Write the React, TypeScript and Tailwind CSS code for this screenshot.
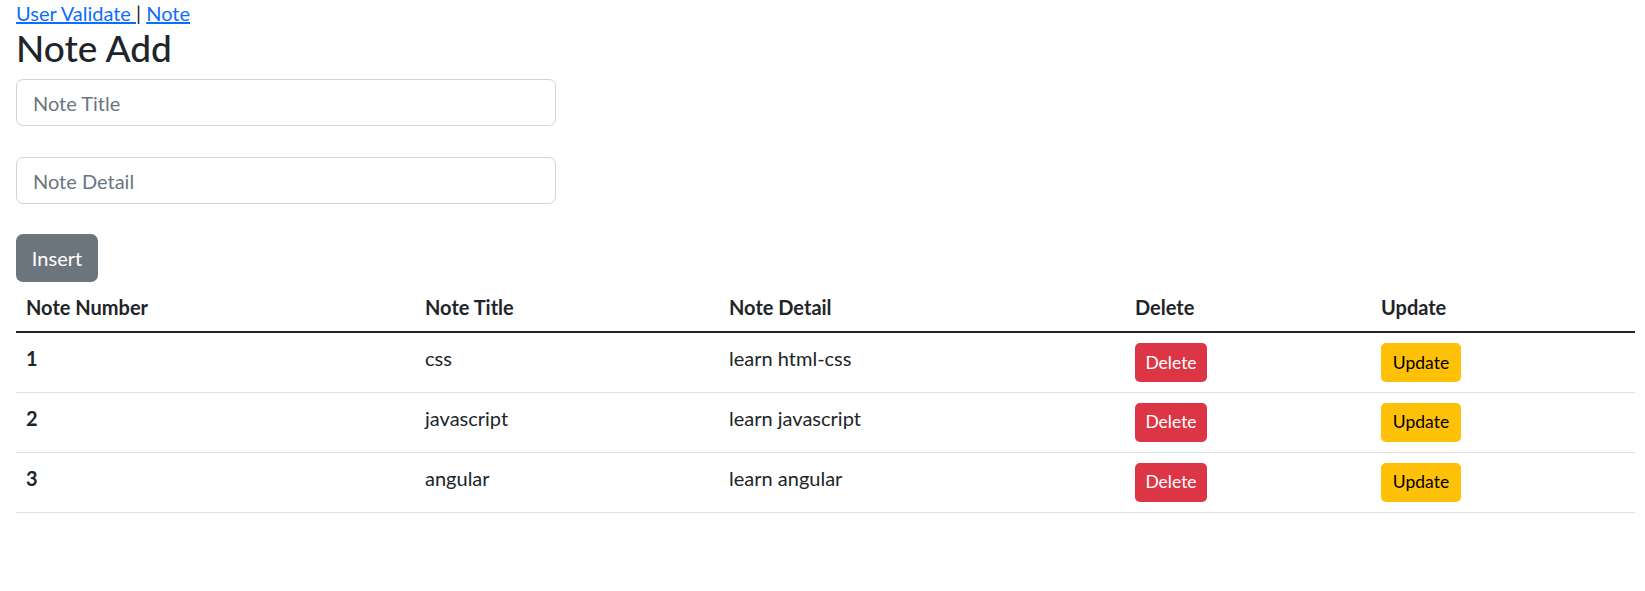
import { useState } from 'react'

type Note = { id: number; title: string; detail: string }

const initialNotes: Note[] = [
    { id: 1, title: 'css', detail: 'learn html-css' },
    { id: 2, title: 'javascript', detail: 'learn javascript' },
    { id: 3, title: 'angular', detail: 'learn angular' },
]

export default function App() {
    const [notes] = useState<Note[]>(initialNotes)

    return (
        <div className="min-h-screen bg-white pl-[16px] pr-[10px] text-[#212529] font-['Lato',sans-serif]">
            {/* Nav links */}
            <div className="text-[20px] leading-[26px]">
                <a href="#" className="text-[#0d6efd] underline">User Validate </a>
                <span>|</span>{' '}
                <a href="#" className="text-[#0d6efd] underline">Note</a>
            </div>

            <h1 className="text-[37px] leading-[44px] font-medium mb-[9px]">Note Add</h1>

            {/* Form */}
            <div className="flex flex-col items-start">
                <input
                    type="text"
                    placeholder="Note Title"
                    className="w-[540px] h-[47px] border border-[#ced4da] rounded-[7px] px-[16px] text-[20px] placeholder:text-[#6c757d] outline-none"
                />
                <input
                    type="text"
                    placeholder="Note Detail"
                    className="mt-[31px] w-[540px] h-[47px] border border-[#ced4da] rounded-[7px] px-[16px] text-[20px] placeholder:text-[#6c757d] outline-none"
                />
                <button className="mt-[30px] w-[82px] h-[48px] bg-[#6c757d] text-white text-[20px] rounded-[7px]">
                    Insert
                </button>
            </div>

            {/* Notes table */}
            <table className="w-full table-fixed border-collapse text-[20px] leading-[30px]">
                <colgroup>
                    <col className="w-[399px]" />
                    <col className="w-[304px]" />
                    <col className="w-[406px]" />
                    <col className="w-[246px]" />
                    <col />
                </colgroup>
                <thead>
                    <tr className="border-b-2 border-[#212529]">
                        <th className="h-[50px] px-[10px] text-left align-middle font-bold">Note Number</th>
                        <th className="h-[50px] px-[10px] text-left align-middle font-bold">Note Title</th>
                        <th className="h-[50px] px-[10px] text-left align-middle font-bold">Note Detail</th>
                        <th className="h-[50px] px-[10px] text-left align-middle font-bold">Delete</th>
                        <th className="h-[50px] px-[10px] text-left align-middle font-bold">Update</th>
                    </tr>
                </thead>
                <tbody>
                    {notes.map((n) => (
                        <tr key={n.id} className="border-b border-[#dee2e6]">
                            <td className="h-[60px] px-[10px] pt-[10px] align-top font-bold">{n.id}</td>
                            <td className="h-[60px] px-[10px] pt-[10px] align-top">{n.title}</td>
                            <td className="h-[60px] px-[10px] pt-[10px] align-top">{n.detail}</td>
                            <td className="h-[60px] px-[10px] pt-[10px] align-top">
                                <button className="w-[72px] h-[39px] bg-[#dc3545] text-white text-[17.5px] leading-[26px] rounded-[5px]">
                                    Delete
                                </button>
                            </td>
                            <td className="h-[60px] px-[10px] pt-[10px] align-top">
                                <button className="w-[80px] h-[39px] bg-[#ffc107] text-black text-[17.5px] leading-[26px] rounded-[5px]">
                                    Update
                                </button>
                            </td>
                        </tr>
                    ))}
                </tbody>
            </table>
        </div>
    )
}
